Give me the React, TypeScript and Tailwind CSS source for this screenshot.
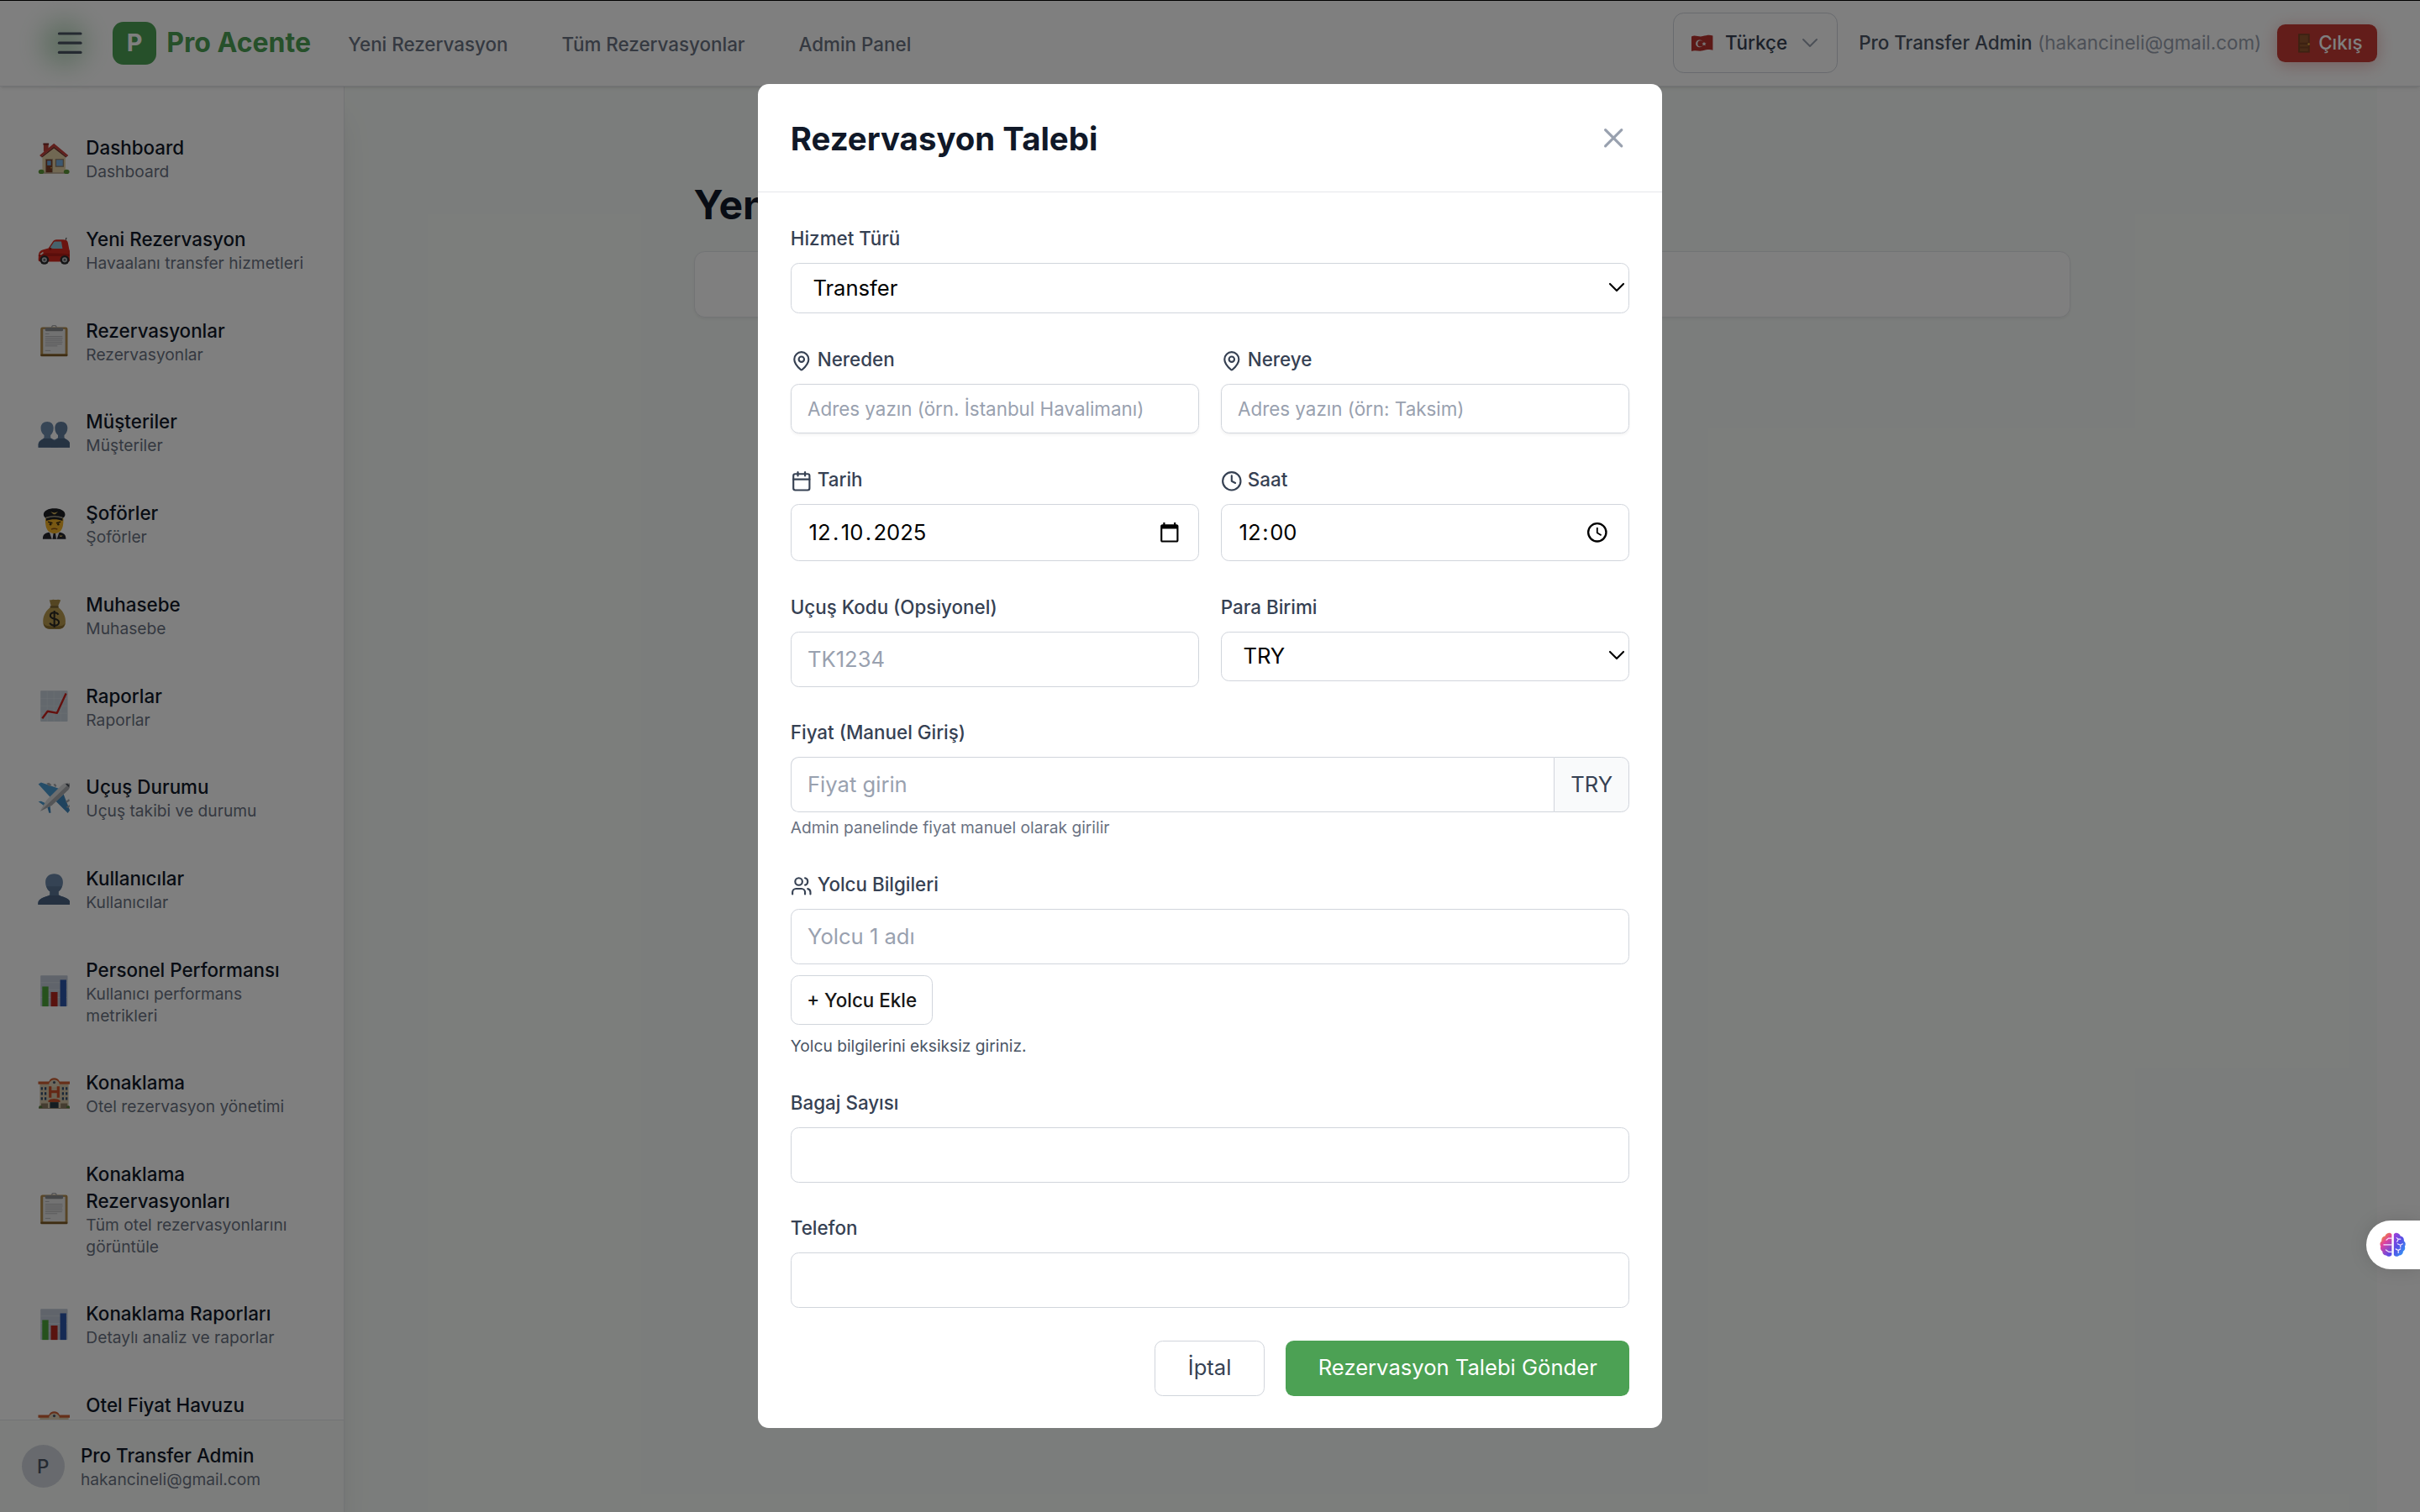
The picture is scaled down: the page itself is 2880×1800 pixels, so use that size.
import type { ReactNode } from "react";
import { Calendar, ChevronDown, Clock, MapPin, Menu, Users, X } from "lucide-react";

type IconName =
  | "house"
  | "car"
  | "clipboard"
  | "people"
  | "pilot"
  | "money"
  | "trend"
  | "plane"
  | "person"
  | "bars"
  | "hotel";

const drawings: Record<IconName, ReactNode> = {
  house: (
    <>
      <path d="M4.3.6h3.6v6H4.3z" fill="#b8433a" />
      <path d="M4 .3h4.2v1.3H4z" fill="#7d2b28" />
      <path d="M3.4 10 12 2l8.6 8v12.4H3.4z" fill="#e3d0a6" />
      <path d="M12 .4 1.3 9.3l1.2 1.1L12 2.9l9.5 7.5 1.2-1.1z" fill="#c3403a" />
      <path d="M2.5 10.4 12 2.9l9.5 7.5-.6.5L12 4 3.100 10.900z" fill="#6d2826" />
      <path d="M5.600 12h5.600v10.600H5.600z" fill="#a08a70" />
      <path d="M6.200 12.500h4.400v10H6.200z" fill="#7a3e28" />
      <path d="M7 13.300h2.800v3.500H7z" fill="#6fa9dc" />
      <circle cx="10" cy="18.600" r=".5" fill="#e9b44a" />
      <path d="M13 12h6.400v6H13z" fill="#8d7a66" />
      <path d="M13.800 12.700h4.800v4.500h-4.800z" fill="#79b0e2" />
      <path d="M4 22h16v1H4z" fill="#b7a58c" />
      <ellipse cx="2.600" cy="21.500" rx="2.100" ry="1.700" fill="#5d9638" />
      <ellipse cx="21.400" cy="21.500" rx="2.100" ry="1.700" fill="#5d9638" />
    </>
  ),
  car: (
    <>
      <path d="M20.500 4.300l.6-1.300.5.2-.5 1.800z" fill="#333" />
      <path
        d="M.6 15.500c.3-1.800 1.500-3 3.300-3.400l4-1.100 3-4.600c.7-1.100 1.700-1.700 3-1.800 2-.2 4.300-.2 6.300.1 1.200.2 1.900.9 2.200 2.100l1 5.300c.4.8.6 1.800.6 2.900v4.500c0 .9-.6 1.400-1.400 1.400H2c-1 0-1.600-.5-1.600-1.400z"
        fill="#d6291f"
      />
      <path d="M8.900 10.900l2.700-4c.4-.6 1-.9 1.700-.9h4.200l.9 5.200c-3 .2-6.500.2-9.500-.3z" fill="#8ec4d8" />
      <path d="M.6 15.900l5.700-1.300 11.700.2 6 .6v1.500H.5z" fill="#b51d17" />
      <path d="M1.200 15.600l2.600-2 .5.900-1.600 1.400z" fill="#f3e6df" />
      <path d="M8.500 10.600h1.600v1.800H8.500z" fill="#a31a15" />
      <circle cx="4.900" cy="19.600" r="3.400" fill="#2b2b2d" />
      <circle cx="4.900" cy="19.600" r="1.900" fill="#b9bcc0" />
      <circle cx="4.900" cy="19.600" r=".8" fill="#55575a" />
      <circle cx="20" cy="19.600" r="3.400" fill="#2b2b2d" />
      <circle cx="20" cy="19.600" r="1.900" fill="#b9bcc0" />
      <circle cx="20" cy="19.600" r=".8" fill="#55575a" />
    </>
  ),
  clipboard: (
    <>
      <rect x="2" y="1.500" width="20.200" height="21.700" rx="1.500" fill="#b08a4c" />
      <rect x="2" y="21.600" width="20.200" height="1.700" rx=".8" fill="#7d5a26" />
      <path d="M3.900 3h16.500v18.400H3.900z" fill="#e4e4e4" />
      <path d="M5.500 1.900h13.300v1.900c0 .4-.3.700-.7.700H6.200c-.4 0-.7-.3-.7-.7z" fill="#8b8c8e" />
      <path d="M10.200 1.900C10.400.8 11.100.2 12.100.2s1.700.6 1.900 1.700" fill="none" stroke="#a7a8aa" strokeWidth=".8" />
      <path d="M5.500 6.500h3M5.500 8.500h12.800M5.500 9.900h13M5.500 11.300h12.600M5.500 12.700h12.900M5.500 14.100h12.500M5.500 15.500h9M5.500 19h4" stroke="#b3b3b5" strokeWidth=".6" />
    </>
  ),
  people: (
    <>
      <path
        d="M7 3.800c2.900 0 4.700 1.900 4.700 4.700 0 2.300-.9 4.300-2.200 5.300v1.700c0 1.200 5.500 1.500 5.700 5.100V23H.4v-2.300c.1-3.700 4.300-3.900 4.300-5.200v-1.700C3.200 12.800 2.200 10.800 2.200 8.500 2.200 5.700 4.100 3.800 7 3.800z"
        fill="#6f8cad"
      />
      <path
        d="M17.300 3.800c2.900 0 4.800 1.900 4.800 4.700 0 2.300-1 4.300-2.400 5.300v1.700c0 1.300 4.200 1.500 4.300 5.200V23H9.800v-2.300c.1-3.700 5.200-3.900 5.200-5.200v-1.700c-1.400-1-2.300-3-2.300-5.300 0-2.800 1.700-4.700 4.600-4.700z"
        fill="#627f9f"
      />
      <path d="M.4 20.500C1 18 3.500 17.300 4.500 16.300h5.200c1 .8 2 1.200 2.800 1.700.8-.5 1.800-.9 2.500-1.700h5c1 1 3.500 1.700 4 4.200V23H.4z" fill="#4d6685" />
    </>
  ),
  pilot: (
    <>
      <path d="M3.700 23c0-3 1.300-4.400 4.300-5l4.300 1.500 4.300-1.500c3 .6 4.300 2 4.300 5z" fill="#26262d" />
      <path d="M8.600 17.700h7.400L14.200 23h-3.800z" fill="#e9e9ec" />
      <path d="M11.600 18.800h1.500l.6 4.200h-2.700z" fill="#222228" />
      <path d="M5.600 7.500h13.400c.2 5-.5 11.300-6.700 11.300S5.400 12.500 5.600 7.500z" fill="#f0b026" />
      <path d="M7.600 10.200l3.300.9M17 10.200l-3.300.9" stroke="#3b2a12" strokeWidth=".9" />
      <circle cx="9.400" cy="12" r=".8" fill="#3b2a12" />
      <circle cx="15.200" cy="12" r=".8" fill="#3b2a12" />
      <path d="M10 15.700c1.500-.7 3.100-.7 4.600 0" stroke="#8a5114" strokeWidth=".9" fill="none" />
      <path d="M4.300 4.800C4.200 1.800 8 .2 12.300.2s8.100 1.600 8 4.600c0 1.200-.9 2-1.900 2.600v2c-4-1.400-8.200-1.400-12.200 0v-2c-1-.6-1.900-1.400-1.900-2.600z" fill="#1d1e22" />
      <path d="M6.200 6.600c4-1.300 8.200-1.300 12.200 0v1c-4-1.300-8.200-1.300-12.200 0z" fill="#a39b83" />
      <path d="M9.500 2.600l2.800.8 2.800-.8-2.200 1.900h-1.200z" fill="#d6b55b" />
      <path d="M16 20.300h2.600l-1 1h-1z" fill="#d6b55b" />
    </>
  ),
  money: (
    <>
      <path d="M8.600.7c1.200.6 2.300-.5 3.600-.1 1.300.4 2.700-.6 4.800.3l-2.200 5H10z" fill="#a98a45" />
      <path
        d="M9.800 6h5c3.400 2.200 5.800 6.200 5.800 10.600 0 3.800-1.800 5.700-4.700 5.700H8.600c-3 0-4.700-1.900-4.700-5.700C3.900 12.200 6.400 8.200 9.800 6z"
        fill="#b99a4f"
      />
      <path d="M4.200 18c1 2 3.400 2.500 8 2.500s7.200-.5 8.200-2.500c-.5 2.900-2.100 4.300-4.500 4.300H8.600c-2.400 0-3.900-1.400-4.400-4.300z" fill="#8c7030" />
      <path d="M9.200 5.200h6.200v1.500H9.200z" fill="#7a6230" />
      <path d="M15.300 11.700c-.6-1-1.700-1.500-3-1.500-1.700 0-3 .9-3 2.300 0 3.200 6.400 1.500 6.400 4.800 0 1.500-1.400 2.500-3.300 2.500-1.600 0-2.900-.6-3.500-1.900M12.300 8.700v12.600" stroke="#2b2823" strokeWidth="1.300" fill="none" />
    </>
  ),
  trend: (
    <>
      <rect x="2" y=".2" width="20.200" height="23" rx=".5" fill="#c6d0da" />
      <path d="M2 6h20M2 11.500h20M2 17h20M7 .2v23M12 .2v23M17 .2v23" stroke="#d7dfe6" strokeWidth=".4" />
      <path d="M3.300 20.800l4-5.300 7 1.300 6.700-14.600" stroke="#c9211c" strokeWidth="1.500" fill="none" strokeLinejoin="round" />
    </>
  ),
  plane: (
    <>
      <path d="M.4 1.500l2-1.200 13.200 4.600-5.800 7z" fill="#4a9ad0" />
      <path d="M23.800 21l-1.500 2.200-9.400-9.400 5.600-6.400z" fill="#4187bd" />
      <path d="M.4 14.600l2-.4 5 2.400-1.500 2z" fill="#4a9ad0" />
      <path d="M9.700 23l-.6-5.600-2 1.200 1.200 4.300z" fill="#4187bd" />
      <path d="M6.500 1l1.800-.6 2 1.600-2 1.200zM11.500 1.700l1.500-.4 1 1.600-1 .8zM23.200 12.500l.5 1.500-2.200 1.500-.8-1zM23.600 17l.3 1.300-2 1-.7-.9z" fill="#a4a7ab" />
      <path d="M23.700.8c.6 1.400.3 3.300-1 5L10.500 17.400 1.800 21.700c0-.2 3.500-6.600 5-8.600L17.500 2.500C19.500.6 22.100-.1 23.700.8z" fill="#d9dadc" />
      <path d="M23.700.8c.6 1.400.3 3.300-1 5L10.500 17.400 1.800 21.700z" fill="#a9abae" />
      <path d="M20.500 1.600l2.600 2.200.4-1.500-1.600-1.200z" fill="#48505a" />
    </>
  ),
  person: (
    <>
      <path
        d="M12.200.2c4 0 6.500 2.500 6.500 6.200 0 3.100-1.300 5.600-3.300 6.900v2.200c0 1.700 8.600 1.700 8.800 6.500v1.100H.2V22c.2-4.800 8.800-4.800 8.800-6.500v-2.200c-2-1.300-3.300-3.800-3.300-6.900C5.700 2.700 8.200.2 12.200.2z"
        fill="#6a87a8"
      />
      <path d="M.2 23.100V22c.2-4.200 6.700-4.700 8.400-5.900h7.200c1.700 1.200 8.200 1.700 8.400 5.900v1.100z" fill="#4b6382" />
      <path d="M6.400 9.500h11.600c-.6 1.600-1.500 2.900-2.600 3.800v2.800H9v-2.800c-1.200-.9-2.100-2.200-2.600-3.800z" fill="#5a7594" />
    </>
  ),
  bars: (
    <>
      <rect x="2" y=".2" width="20.200" height="23" rx=".5" fill="#c0c9d6" />
      <path d="M2 5.500h20M2 11h20M2 16.500h20" stroke="#d5dce5" strokeWidth=".5" />
      <path d="M3.300 8.400h4.600v14.800H3.300z" fill="#4da33a" />
      <path d="M9.700 12.500h5v10.700h-5z" fill="#b3261f" />
      <path d="M16.600 3.400h4.600v19.800h-4.600z" fill="#2b54a8" />
    </>
  ),
  hotel: (
    <>
      <path d="M1.500 4.500h21.400v18H1.500z" fill="#d6c7a9" />
      <path d="M.3 2.800h8C9 1 10.500.2 12.200.2S15.400 1 16.200 2.800h8v2H.3z" fill="#cc5f33" />
      <path d="M8.400 4c.8-1.800 2.100-2.500 3.800-2.500S15.200 2.200 16 4v3H8.400z" fill="#e0d3b8" />
      <circle cx="12.200" cy="3.500" r="1" fill="#46556a" />
      <path d="M8.200 6.400h2v3h4v-3h2v8.400h-2v-3.400h-4v3.400h-2z" fill="#c9502a" />
      <path d="M2.300 7h1.400v2H2.300zM5 7h1.400v2H5zM2.300 10.800h1.400v2H2.300zM5 10.800h1.400v2H5zM2.300 14.600h1.400v2H2.300zM5 14.600h1.400v2H5zM18 7h1.400v2H18zM20.700 7h1.400v2h-1.400zM18 10.800h1.400v2H18zM20.700 10.800h1.400v2h-1.400zM18 14.600h1.400v2H18zM20.700 14.600h1.400v2h-1.400z" fill="#2f4a6e" />
      <path d="M7.800 17c1-1 2.600-1.400 4.400-1.400s3.400.4 4.400 1.400v1.200H7.800z" fill="#c9532c" />
      <path d="M9 18.200h6.400v4.600H9z" fill="#2d3a44" />
      <path d="M2.500 19h5v3.800h-5zM17 19h5v3.800h-5z" fill="#8a7a62" />
      <ellipse cx="2" cy="22" rx="1.300" ry="1.200" fill="#55783a" />
      <ellipse cx="22.500" cy="22" rx="1.300" ry="1.200" fill="#55783a" />
      <path d="M.8 22.500h23v.7H.8z" fill="#9c8d76" />
    </>
  ),
};

const menu: { icon: IconName; title: string; sub?: string }[] = [
  { icon: "house", title: "Dashboard", sub: "Dashboard" },
  { icon: "car", title: "Yeni Rezervasyon", sub: "Havaalanı transfer hizmetleri" },
  { icon: "clipboard", title: "Rezervasyonlar", sub: "Rezervasyonlar" },
  { icon: "people", title: "Müşteriler", sub: "Müşteriler" },
  { icon: "pilot", title: "Şoförler", sub: "Şoförler" },
  { icon: "money", title: "Muhasebe", sub: "Muhasebe" },
  { icon: "trend", title: "Raporlar", sub: "Raporlar" },
  { icon: "plane", title: "Uçuş Durumu", sub: "Uçuş takibi ve durumu" },
  { icon: "person", title: "Kullanıcılar", sub: "Kullanıcılar" },
  { icon: "bars", title: "Personel Performansı", sub: "Kullanıcı performans metrikleri" },
  { icon: "hotel", title: "Konaklama", sub: "Otel rezervasyon yönetimi" },
  { icon: "clipboard", title: "Konaklama Rezervasyonları", sub: "Tüm otel rezervasyonlarını görüntüle" },
  { icon: "bars", title: "Konaklama Raporları", sub: "Detaylı analiz ve raporlar" },
  { icon: "hotel", title: "Otel Fiyat Havuzu" },
];

function Header() {
  return (
    <header className="relative z-10 box-content flex h-16 shrink-0 items-center justify-between border-b border-gray-200 bg-white pr-8 pl-8 shadow-sm">
      <div className="flex items-center">
        <button className="relative mr-3 flex size-10 items-center justify-center">
          <span className="absolute top-1 left-0 size-8 rounded-full bg-[#2f8f3c]/35 blur-[10px]" />
          <Menu className="relative size-6 text-[#4b5563]" />
        </button>
        <div className="flex size-8 items-center justify-center rounded-lg bg-[#4ca154] text-lg font-bold text-white">P</div>
        <span className="ml-2 w-[107px] text-xl font-bold whitespace-nowrap text-[#4ca154]">Pro Acente</span>
        <nav className="ml-7 flex gap-10 pt-0.5 text-sm font-medium text-gray-500">
          <a>Yeni Rezervasyon</a>
          <a>Tüm Rezervasyonlar</a>
          <a>Admin Panel</a>
        </nav>
      </div>
      <div className="flex items-center gap-4">
        <button className="flex h-[45px] w-[122px] items-center justify-between rounded-lg border border-gray-300 pr-2.5 pl-3 text-sm font-medium text-gray-700">
          <span className="flex items-center gap-[9px]">
            <svg viewBox="0 0 17 18" className="h-[18px] w-[17px]">
              <path d="M.6 4C3.500 2.600 6 4.600 9 3.800s5-1.200 7.500-.4v10.800c-2.500-.8-4.500-.4-7.500.4s-5.500-.8-8.400.4z" fill="#b8332f" />
              <circle cx="6.600" cy="9.300" r="2.800" fill="#f1eeee" />
              <circle cx="7.400" cy="9.300" r="2.200" fill="#b8332f" />
              <path d="M10 7.900l.5 1 1.100.1-.8.8.2 1.100-1-.6-1 .6.200-1.100-.8-.8 1.100-.1z" fill="#f1eeee" />
            </svg>
            Türkçe
          </span>
          <ChevronDown className="size-5 text-gray-400" strokeWidth={1.5} />
        </button>
        <div className="flex items-center text-sm whitespace-nowrap">
          <span className="font-medium text-gray-600">Pro Transfer Admin</span>
          <span className="ml-1 text-gray-400">(hakancineli@gmail.com)</span>
          <button className="ml-3 flex h-7 w-[74px] items-center rounded-md bg-[#c63a34] pl-3 font-medium text-white shadow-[0_2px_12px_rgba(198,58,52,0.35)]">
            <svg viewBox="0 0 18 18" className="size-[18px] shrink-0">
              <path d="M3.200 2h8.500v14H3.200z" fill="#7a4424" />
              <path d="M4.300 3.200h6.200v5.400H4.300zM4.300 10h6.200v1.600H4.300zM4.300 12.800h6.200v2.200H4.300z" fill="#93562f" />
              <circle cx="11" cy="9.700" r=".8" fill="#e0ac3e" />
            </svg>
            <span className="ml-[0.5px]">Çıkış</span>
          </button>
        </div>
      </div>
    </header>
  );
}

function Sidebar() {
  return (
    <aside className="relative z-[5] flex w-64 shrink-0 flex-col border-r border-gray-200 bg-white shadow-xl">
      <nav className="min-h-0 flex-1 space-y-2 overflow-hidden px-4 pt-[23.4px]">
        {menu.map((m) => (
          <a key={m.title} className="flex items-center gap-3 px-3 py-3">
            <svg viewBox="0 0 24 24" className="size-6 shrink-0">
              {drawings[m.icon]}
            </svg>
            <span className="min-w-0 flex-1">
              <span className="block text-sm font-medium text-gray-900">{m.title}</span>
              {m.sub ? <span className="block text-xs text-gray-500">{m.sub}</span> : <span className="block h-8" />}
            </span>
          </a>
        ))}
      </nav>
      <div className="flex shrink-0 items-center gap-3 border-t border-gray-200 bg-[#f8fbf9] p-4">
        <div className="flex size-8 items-center justify-center rounded-full bg-gray-300 text-sm font-medium text-gray-600">P</div>
        <div>
          <div className="text-sm font-medium text-gray-900">Pro Transfer Admin</div>
          <div className="text-xs text-gray-500">hakancineli@gmail.com</div>
        </div>
      </div>
    </aside>
  );
}

const label = "mb-2 block text-sm font-medium text-gray-700";
const iconLabel = "mb-2 block pt-[0.5px] text-sm font-medium text-gray-700";
const field = "w-full rounded-md border border-gray-300";

function TextField({ placeholder, className = "" }: { placeholder?: string; className?: string }) {
  return <input type="text" placeholder={placeholder} className={`${field} h-[41.25px] px-3 text-base placeholder:text-gray-400 ${className}`} />;
}

function SelectField({ value }: { value: string }) {
  return (
    <div className="relative">
      <select className={`${field} block h-[37.3px] appearance-none bg-white pr-8 pl-4 text-base text-black`}>
        <option>{value}</option>
      </select>
      <ChevronDown className="pointer-events-none absolute top-2 right-[-0.5px] size-5 text-black" strokeWidth={1.6} />
    </div>
  );
}

function Modal() {
  return (
    <div className="h-[1000px] w-[672px] rounded-lg bg-white">
      <div className="flex items-center justify-between border-b border-gray-200 p-6">
        <h2 className="pt-[0.7px] text-2xl leading-[31.3px] font-bold text-gray-900">Rezervasyon Talebi</h2>
        <X className="size-6 text-gray-400" />
      </div>
      <form className="space-y-6 px-6 pt-[24.6px]">
        <div>
          <label className={label}>Hizmet Türü</label>
          <SelectField value="Transfer" />
        </div>
        <div className="grid grid-cols-2 gap-4">
          <div>
            <label className={iconLabel}>
              <MapPin className="mr-1 inline size-4" />
              Nereden
            </label>
            <input placeholder="Adres yazın (örn. İstanbul Havalimanı)" className={`${field} block h-[37.3px] px-3 text-sm shadow-xs placeholder:text-gray-400`} />
          </div>
          <div>
            <label className={iconLabel}>
              <MapPin className="mr-1 inline size-4" />
              Nereye
            </label>
            <input placeholder="Adres yazın (örn: Taksim)" className={`${field} block h-[37.3px] px-3 text-sm shadow-xs placeholder:text-gray-400`} />
          </div>
        </div>
        <div className="grid grid-cols-2 gap-4">
          <div>
            <label className={label}>
              <Calendar className="mr-1 inline size-4" />
              Tarih
            </label>
            <div className={`${field} flex h-[43px] items-center justify-between px-3 text-base text-black`}>
              <span className="flex pl-px">
                <span>12</span>
                <span className="px-[1.5px]">.</span>
                <span>10</span>
                <span className="px-[1.5px]">.</span>
                <span>2025</span>
              </span>
              <svg viewBox="0 0 24 24" className="mr-[1.5px] size-4">
                <path
                  fill="black"
                  d="M20 3h-1V1h-2v2H7V1H5v2H4c-1.100 0-2 .9-2 2v16c0 1.100.9 2 2 2h16c1.100 0 2-.9 2-2V5c0-1.100-.9-2-2-2zm0 18H4V8h16v13z"
                />
              </svg>
            </div>
          </div>
          <div>
            <label className={label}>
              <Clock className="mr-1 inline size-4" />
              Saat
            </label>
            <div className={`${field} flex h-[43px] items-center justify-between px-3 text-base text-black`}>
              <span className="flex pl-px">
                <span>12</span>
                <span className="px-px">:</span>
                <span>00</span>
              </span>
              <svg viewBox="0 0 24 24" className="mr-[3.5px] size-4" fill="none" stroke="black">
                <circle cx="12" cy="12" r="10" strokeWidth="2.200" />
                <path d="M12 6.500v6l4.500 2.700" strokeWidth="1.700" />
              </svg>
            </div>
          </div>
        </div>
        <div className="grid grid-cols-2 gap-4">
          <div>
            <label className={label}>Uçuş Kodu (Opsiyonel)</label>
            <TextField placeholder="TK1234" className="block" />
          </div>
          <div>
            <label className={label}>Para Birimi</label>
            <SelectField value="TRY" />
          </div>
        </div>
        <div>
          <label className={label}>Fiyat (Manuel Giriş)</label>
          <div className="flex">
            <TextField placeholder="Fiyat girin" className="min-w-0 flex-1 rounded-r-none border-r-0" />
            <span className="flex h-[41.25px] items-center rounded-r-md border border-gray-300 bg-gray-50 px-3 text-base text-gray-700">TRY</span>
          </div>
          <p className="mt-1 text-xs text-gray-500">Admin panelinde fiyat manuel olarak girilir</p>
        </div>
        <div>
          <label className={label}>
            <Users className="mr-1 inline size-4" />
            Yolcu Bilgileri
          </label>
          <TextField placeholder="Yolcu 1 adı" className="block" />
          <button type="button" className="mt-2 block h-[37.25px] rounded-md border border-gray-300 px-[11.5px] text-sm font-medium text-neutral-900">
            + Yolcu Ekle
          </button>
          <p className="mt-2 text-xs text-gray-600">Yolcu bilgilerini eksiksiz giriniz.</p>
        </div>
        <div>
          <label className={label}>Bagaj Sayısı</label>
          <TextField className="block" />
        </div>
        <div>
          <label className={label}>Telefon</label>
          <TextField className="block" />
        </div>
        <div className="flex justify-end gap-4">
          <button type="button" className="h-[41.25px] rounded-md border border-gray-300 px-6 text-base text-gray-700">
            İptal
          </button>
          <button type="button" className="h-[41.25px] rounded-md bg-[#4ca154] px-6 text-base text-white">
            Rezervasyon Talebi Gönder
          </button>
        </div>
      </form>
    </div>
  );
}

function BrainTab() {
  return (
    <div className="absolute right-0 bottom-[180.500px] z-30 flex h-[36.500px] w-10 items-center rounded-l-full bg-white pl-2.5 shadow-[0_0_14px_rgba(0,0,0,0.12)]">
      <svg viewBox="0 0 30 29" className="h-[18.500px] w-[19.500px]">
        <defs>
          <linearGradient id="brainLeft" x1="0.200" y1="0" x2="0.700" y2="1">
            <stop offset="0.050" stopColor="#f0962e" />
            <stop offset="0.400" stopColor="#e0409f" />
            <stop offset="1" stopColor="#5a4be8" />
          </linearGradient>
          <linearGradient id="brainRight" x1="0" y1="0" x2="0.800" y2="1">
            <stop offset="0" stopColor="#a63bd6" />
            <stop offset="0.500" stopColor="#5550e6" />
            <stop offset="1" stopColor="#2f9bf5" />
          </linearGradient>
        </defs>
        <path d="M13.800 2.500v24c-1 2-4.500 2.500-6.500.5-2.500 0-4.600-2-4.300-4.700C.8 21 .2 18.500 1 16.500c-1.400-2-1-5 1-6.300C1.500 7 3.500 4.800 6 4.500 7.500.3 12.500-.2 13.800 2.500z" fill="url(#brainLeft)" />
        <path d="M16.200 2.500v24c1 2 4.500 2.500 6.500.5 2.500 0 4.600-2 4.300-4.700 2.200-1.300 2.800-3.800 2-5.800 1.400-2 1-5-1-6.300.5-3.200-1.500-5.400-4-5.700C22.500.3 17.500-.2 16.200 2.500z" fill="url(#brainRight)" />
        <path d="M13.800 7H10L7.500 9M13.800 14.500H4.500M13.800 23H10.500L7 20.500M20 11l1.500-3M21.500 8L19.500 6.500M21.500 8h2.500M20.500 13.500l3.500 1.500 2.500-1.500M24 15v2.500M18.500 19.500l3 1.500 2.500-1.500M21.500 21v3" stroke="#f3e6ff" strokeWidth="1.200" fill="none" strokeLinecap="round" />
      </svg>
    </div>
  );
}

export default function App() {
  return (
    <div className="relative flex h-[1125px] w-[1800px] flex-col overflow-hidden bg-[#fcfcfc] font-['Inter',sans-serif] [zoom:1.6]">
      <Header />
      <div className="flex min-h-0 flex-1">
        <Sidebar />
        <main className="mr-8 flex-1 bg-[#f7fbf8] pt-[70px]">
          <div className="ml-[260px] w-[1024px]">
            <h1 className="text-3xl font-bold text-gray-900">Yeni Rezervasyon</h1>
            <div className="mt-4 h-[49.500px] rounded-lg border border-gray-200 bg-white shadow-xs" />
          </div>
        </main>
      </div>
      <div className="absolute inset-0 z-20 flex items-center justify-center bg-black/50">
        <Modal />
      </div>
      <BrainTab />
      <div className="absolute inset-x-0 top-0 z-30 h-[0.65px] bg-black" />
    </div>
  );
}
